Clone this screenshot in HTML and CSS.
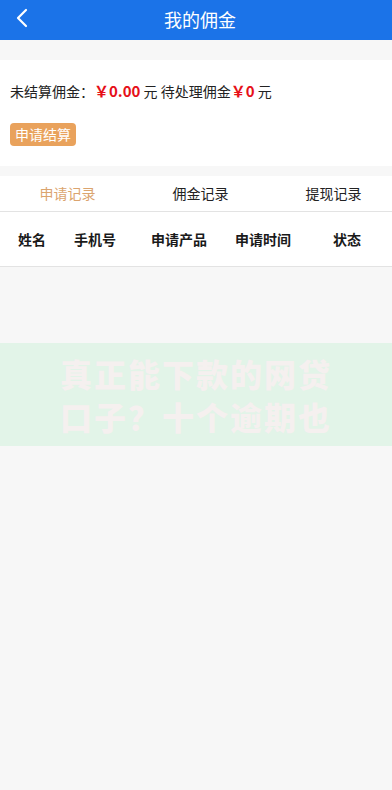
FILE: index.html
```html
<!DOCTYPE html>
<html lang="zh">
<head>
<meta charset="utf-8">
<title>我的佣金</title>
<link rel="stylesheet" href="styles.css">
</head>
<body>
<div class="page">
  <header class="topbar">
    <span class="back">
      <svg width="14" height="20" viewBox="0 0 14 20"><path d="M11 2 L3 10 L11 18" fill="none" stroke="#fff" stroke-width="2.2" stroke-linecap="round" stroke-linejoin="round"/></svg>
    </span>
    <h1 class="title">我的佣金</h1>
  </header>

  <section class="summary">
    <p class="sum-line">未结算佣金：<b class="money">￥0.00</b> 元 待处理佣金<b class="money">￥0</b> 元</p>
    <div class="btn-row"><span class="btn">申请结算</span></div>
  </section>

  <nav class="tabs">
    <span class="tab active">申请记录</span>
    <span class="tab">佣金记录</span>
    <span class="tab">提现记录</span>
  </nav>

  <div class="thead">
    <span>姓名</span>
    <span>手机号</span>
    <span>申请产品</span>
    <span>申请时间</span>
    <span>状态</span>
  </div>

  <div class="empty">
    <div class="banner">
      <p class="banner-text">真正能下款的网贷<br>口子？十个逾期也</p>
    </div>
  </div>
</div>
</body>
</html>
```

FILE: styles.css
```css
html, body {
  margin: 0;
  padding: 0;
  overflow: hidden;
  background: #f7f7f7;
}
body {
  font-family: "Noto Sans CJK SC", "Noto Sans", sans-serif;
  color: #222;
}
.page {
  width: 400px;
  min-height: 790px;
  background: #f7f7f7;
}
.topbar {
  height: 40px;
  background: #1b73e8;
  display: flex;
  align-items: center;
  justify-content: center;
  position: relative;
}
.back {
  position: absolute;
  left: 15px;
  top: 8px;
  display: block;
  height: 20px;
}
.title {
  margin: 0;
  font-size: 18px;
  font-weight: 400;
  color: #fff;
  line-height: 40px;
  margin-top: -2px;
}
.summary {
  margin-top: 20px;
  background: #fff;
  height: 106px;
  padding: 0 10px;
  box-sizing: border-box;
  display: flex;
  flex-direction: column;
}
.sum-line {
  margin: 20px 0 0;
  font-size: 14px;
  line-height: 22px;
  color: #222;
}
.money {
  color: #e60f18;
  font-weight: 700;
  font-size: 15px;
}
.btn-row {
  margin-top: 21px;
  display: flex;
}
.btn {
  background: #e9a25c;
  color: #fff;
  font-size: 14px;
  line-height: 23px;
  height: 23px;
  padding: 0 5px;
  border-radius: 4px;
}
.tabs {
  margin-top: 10px;
  background: #fff;
  height: 35px;
  display: grid;
  grid-template-columns: repeat(3, 133px);
  align-items: center;
  border-bottom: 1px solid #e3e3e3;
  padding-left: 1px;
}
.tab {
  text-align: center;
  font-size: 14px;
  color: #222;
  margin-top: -1px;
}
.tab.active {
  color: #dba46e;
}
.thead {
  background: #fff;
  height: 54px;
  display: grid;
  grid-template-columns: 64px 62px 106px 62px 106px;
  align-items: center;
  border-bottom: 1px solid #e3e3e3;
}
.thead span {
  text-align: center;
  font-size: 14px;
  font-weight: 700;
  color: #1a1a1a;
}
.empty {
  padding-top: 76px;
}
.banner {
  width: 392px;
  height: 103px;
  background: #e2f4e8;
  display: flex;
  align-items: center;
  justify-content: center;
}
.banner-text {
  margin: 0;
  font-size: 32px;
  line-height: 43px;
  font-weight: 900;
  letter-spacing: 2px;
  color: #f5f0ef;
  text-align: left;
}
```
